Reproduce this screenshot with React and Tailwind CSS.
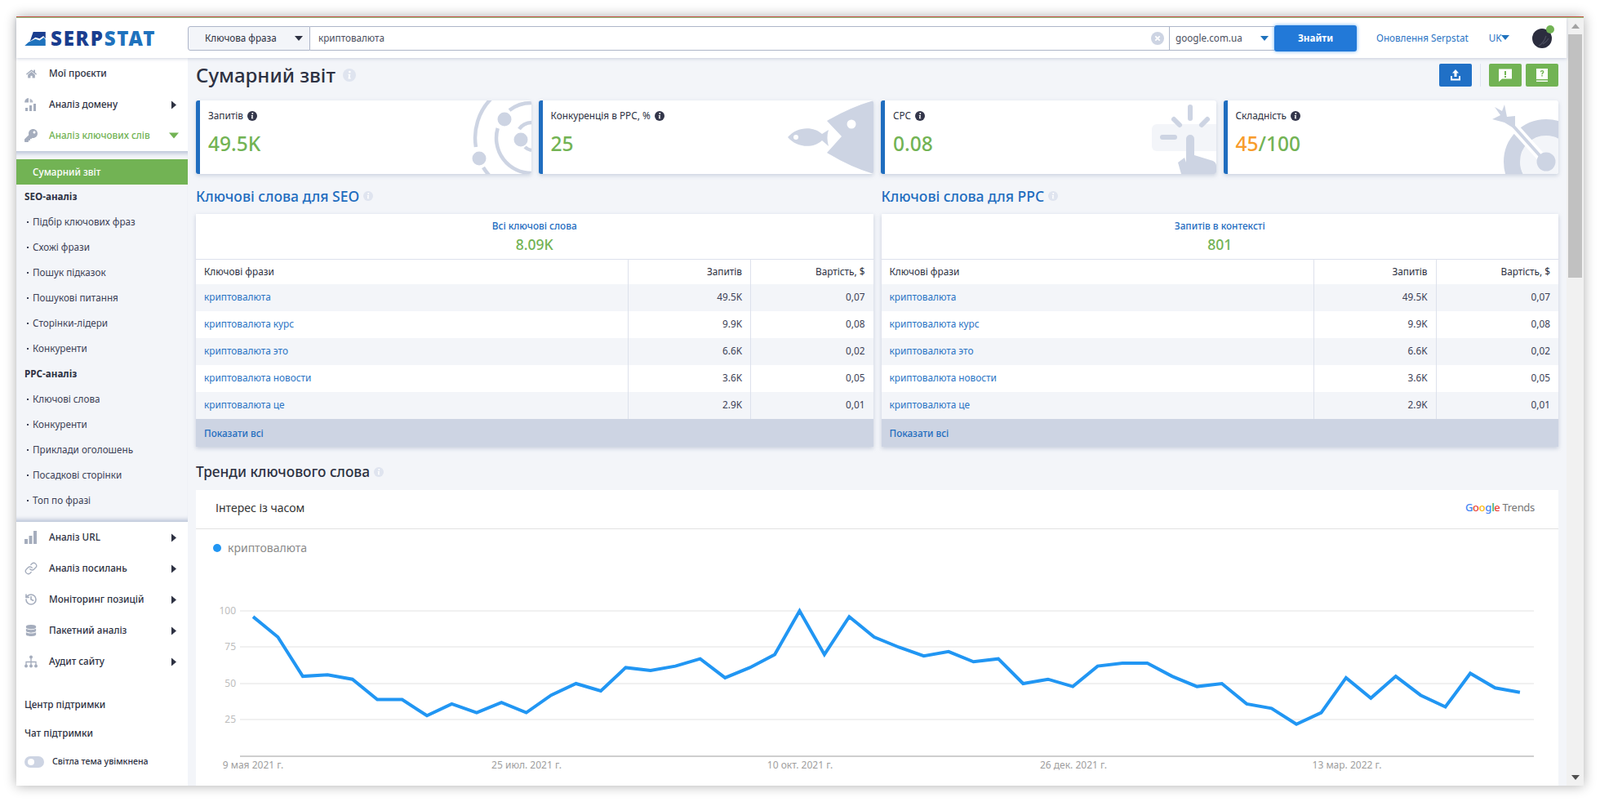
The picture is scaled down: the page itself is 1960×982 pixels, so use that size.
import React from 'react';
import { FaHome, FaKey, FaDatabase } from 'react-icons/fa';
import { History, Link } from 'lucide-react';

const seoRows = [
  ['криптовалюта', '49.5K', '0,07'],
  ['криптовалюта курс', '9.9K', '0,08'],
  ['криптовалюта это', '6.6K', '0,02'],
  ['криптовалюта новости', '3.6K', '0,05'],
  ['криптовалюта це', '2.9K', '0,01'],
];

const seoLinks = ['Підбір ключових фраз', 'Схожі фрази', 'Пошук підказок', 'Пошукові питання', 'Сторінки-лідери', 'Конкуренти'];
const ppcLinks = ['Ключові слова', 'Конкуренти', 'Приклади оголошень', 'Посадкові сторінки', 'Топ по фразі'];

const trend = [96, 82, 55, 56, 53, 39, 39, 28, 36, 30, 37, 30, 42, 50, 45, 61, 59, 62, 67, 54, 61, 70, 100, 70, 96, 82, 75, 69, 72, 65, 67, 50, 53, 48, 62, 64, 64, 55, 48, 50, 36, 33, 22, 30, 54, 40, 55, 42, 34, 57, 47, 44];

const Caret = ({ dir = 'down', className = '' }) => (
  <svg viewBox="0 0 10 10" className={className} fill="currentColor">
    {dir === 'down' && <polygon points="0,2 10,2 5,8" />}
    {dir === 'right' && <polygon points="2,0 8,5 2,10" />}
    {dir === 'up' && <polygon points="0,8 10,8 5,2" />}
  </svg>
);

const Info = ({ light, size = 12 }) => (
  <svg width={size} height={size} viewBox="0 0 12 12" className="shrink-0">
    <circle cx="6" cy="6" r="6" fill={light ? '#dfe4ef' : '#33364a'} />
    <circle cx="6.3" cy="3" r="1" fill="#fff" />
    <path d="M4.8 5h2.2l-.6 3.4h.9v.9H4.9l.5-3.4h-.6z" fill="#fff" />
  </svg>
);

const DomainIcon = () => (
  <svg width="16" height="17" viewBox="0 0 16 17" fill="#a5adbd">
    <path d="M5 0v5.500H0.200A5 5 0 0 1 5 0z" />
    <path d="M6.500 1a5 5 0 0 1 4 4.500h-4z" opacity="0.8" />
    <rect x="1" y="12" width="3" height="4" />
    <rect x="6" y="9" width="3" height="7" />
    <rect x="11" y="7" width="3" height="9" />
  </svg>
);

const BarsIcon = () => (
  <svg width="15" height="16" viewBox="0 0 15 16" fill="#a5adbd">
    <rect x="0" y="10" width="4" height="6" />
    <rect x="5.500" y="6" width="4" height="10" />
    <rect x="11" y="0" width="4" height="16" />
  </svg>
);

const TreeIcon = () => (
  <svg width="16" height="16" viewBox="0 0 16 16" fill="#a5adbd" stroke="#a5adbd">
    <circle cx="8" cy="2.500" r="2" stroke="none" />
    <path d="M8 3V13M2 13V8.500H14V13" fill="none" strokeWidth="1.300" />
    <circle cx="2" cy="13.500" r="2" stroke="none" />
    <circle cx="8" cy="13.500" r="2" stroke="none" />
    <circle cx="14" cy="13.500" r="2" stroke="none" />
  </svg>
);

const NavItem = ({ icon, label, arrow, active }) => (
  <div className="flex items-center h-[38px] pl-[10px]">
    <span className="w-[30px] flex items-center text-[#a5adbd]">{icon}</span>
    <span className={`flex-1 text-[11.700px] font-medium ${active ? 'text-[#72b354]' : 'text-[#2d3142]'}`}>{label}</span>
    {arrow && <Caret dir="right" className="w-[10px] h-[11px] mr-[12px] text-[#2d3142]" />}
    {active && <Caret className="w-[12px] h-[12px] mr-[11px] text-[#72b354]" />}
  </div>
);

const SubLink = ({ label }) => (
  <div className="flex items-center h-[31px] pl-[13px] text-[11.700px] text-[#3c4156]">
    <span className="w-[2px] h-[2px] bg-[#3c4156] mr-[5px]" />
    {label}
  </div>
);

const Sidebar = () => (
  <aside className="w-[210px] shrink-0 bg-white flex flex-col">
    <NavItem icon={<FaHome size={13} className="ml-[2px]" />} label="Мої проєкти" />
    <NavItem icon={<DomainIcon />} label="Аналіз домену" arrow />
    <NavItem icon={<FaKey size={16} />} label="Аналіз ключових слів" active />
    <div className="h-[454px] bg-[#f3f5f9] pt-[10px] shadow-[inset_0_7px_5px_-4px_#bcc5d8,inset_0_-7px_5px_-4px_#bcc5d8]">
      <div className="h-[31px] bg-[#72b354] flex items-center pl-[20px] text-[11.700px] font-medium text-white">Сумарний звіт</div>
      <div className="h-[30px] flex items-center pl-[10px] text-[11.700px] font-bold text-[#2d3142]">SEO-аналіз</div>
      {seoLinks.map((l) => <SubLink key={l} label={l} />)}
      <div className="h-[31px] flex items-center pl-[10px] text-[11.700px] font-bold text-[#2d3142]">PPC-аналіз</div>
      {ppcLinks.map((l) => <SubLink key={l} label={l} />)}
    </div>
    <NavItem icon={<BarsIcon />} label="Аналіз URL" arrow />
    <NavItem icon={<Link size={16} strokeWidth={2} />} label="Аналіз посилань" arrow />
    <NavItem icon={<History size={16} strokeWidth={2.400} />} label="Моніторинг позицій" arrow />
    <NavItem icon={<FaDatabase size={14} className="ml-[1px]" />} label="Пакетний аналіз" arrow />
    <NavItem icon={<TreeIcon />} label="Аудит сайту" arrow />
    <div className="mt-[16px] h-[35px] flex items-center pl-[10px] text-[11.700px] font-medium text-[#2d3142]">Центр підтримки</div>
    <div className="h-[35px] flex items-center pl-[10px] text-[11.700px] font-medium text-[#2d3142]">Чат підтримки</div>
    <div className="h-[35px] flex items-center pl-[10px] text-[10.600px] font-medium text-[#2d3142]">
      <span className="w-[24px] h-[14px] rounded-full bg-[#cdd4e3] flex items-center pl-[4px] mr-[10px]">
        <span className="w-[8px] h-[8px] rounded-full bg-white" />
      </span>
      Світла тема увімкнена
    </div>
  </aside>
);

const Logo = () => (
  <div className="w-[210px] shrink-0 flex items-center pl-[10px]">
    <svg width="26" height="18" viewBox="0 0 78 55">
      <path d="M32 3H78V28L70 18 56 28 40 24 20 38Z" fill="#1a3d8f" />
      <path d="M0 55 14 42 40 30 56 35 72 24 78 32V55Z" fill="#1f72bd" />
    </svg>
    <span className="ml-[6px] text-[24px] leading-none font-black tracking-[1.800px] text-[#1a3d8f]">
      SERP<span className="text-[#1f72bd]">STAT</span>
    </span>
  </div>
);

const Header = () => (
  <header className="relative z-10 flex items-center h-[49px] bg-white shadow-[0_1px_4px_rgba(130,145,175,0.4)]">
    <Logo />
    <div className="flex w-[1432px] h-[30px] text-[11.700px]">
      <div className="w-[150px] flex items-center justify-between pl-[20px] pr-[8px] bg-[#f3f5f9] border border-[#aeb6c9] rounded-l-[3px] text-[#2d3142]">
        Ключова фраза
        <Caret className="w-[10px] h-[10px] text-[#2d3142]" />
      </div>
      <div className="flex-1 flex items-center border-y border-[#aeb6c9] pl-[10px] pr-[6px]">
        <input readOnly value="криптовалюта" className="flex-1 outline-none text-[#4b4f60]" />
        <svg width="16" height="16" viewBox="0 0 16 16">
          <circle cx="8" cy="8" r="8" fill="#cdd4e3" />
          <path d="M5.300 5.300l5.400 5.400M10.700 5.300l-5.400 5.400" stroke="#fff" strokeWidth="1.800" />
        </svg>
      </div>
      <div className="w-[129px] flex items-center justify-between pl-[7px] pr-[7px] border border-r-0 border-[#aeb6c9] text-[#4b4f60]">
        google.com.ua
        <Caret className="w-[10px] h-[10px] text-[#1f72bd]" />
      </div>
      <button className="w-[101px] -my-[1px] bg-[#2279d8] rounded-[3px] text-white font-bold shadow-[0_0_4px_rgba(60,150,240,0.8)]">Знайти</button>
    </div>
    <span className="ml-[24px] text-[11.700px] text-[#2b74c4]">Оновлення Serpstat</span>
    <span className="ml-[25px] flex items-center text-[11.700px] text-[#2b74c4]">
      UK
      <Caret className="w-[10px] h-[10px] text-[#1f72bd]" />
    </span>
    <div className="relative ml-[28px] w-[24px] h-[24px] rounded-full bg-[#2b2d3e]">
      <svg viewBox="0 0 24 24" className="w-[24px] h-[24px]" fill="none" stroke="#4a4d5e" strokeWidth="1.200">
        <path d="M8 21Q14 18 17 9" />
        <path d="M13 19Q18 16 20 12" />
      </svg>
      <span className="absolute -top-[4px] -right-[3px] w-[10px] h-[10px] rounded-full bg-[#72b354]" />
    </div>
  </header>
);

const Orbits = () => (
  <svg viewBox="0 0 110 90" className="absolute right-0 top-0 w-[110px] h-[90px]" fill="none" stroke="#cdd4e3" strokeWidth="4.500">
    <path d="M60.400 -2A69 69 0 0 0 41.900 57" />
    <path d="M51 82A69 69 0 0 0 62.400 96" />
    <path d="M68.700 34A43 43 0 0 0 110 89" />
    <path d="M110 3A43 43 0 0 0 83 12" />
    <path d="M110 27A19 19 0 0 0 95 35" />
    <path d="M102 57Q105 60 110 61" />
    <circle cx="46" cy="71" r="8.500" fill="#cdd4e3" stroke="none" />
    <circle cx="77" cy="23" r="8.500" fill="#cdd4e3" stroke="none" />
    <circle cx="97" cy="48" r="8.500" fill="#cdd4e3" stroke="none" />
  </svg>
);

const Fish = () => (
  <svg viewBox="0 0 110 90" className="absolute right-0 top-0 w-[110px] h-[90px]">
    <path d="M110 0Q80 9 53 25L71 44 53 64Q80 81 110 90Z" fill="#cdd4e3" />
    <circle cx="83" cy="29" r="5.500" fill="#fff" />
    <path d="M5 45C15 33 35 30 47 41L55 36Q52 45 55 56L47 49C35 60 15 57 5 45Z" fill="#cdd4e3" />
    <circle cx="15" cy="45" r="3" fill="#fff" />
  </svg>
);

const Hand = () => (
  <svg viewBox="0 0 110 90" className="absolute right-0 top-0 w-[110px] h-[90px]">
    <path d="M37 29H110V62H37A6 6 0 0 1 31 56V35A6 6 0 0 1 37 29Z" fill="#f3f5f9" />
    <g stroke="#cdd4e3" strokeWidth="6" strokeLinecap="round">
      <path d="M78 8V22" />
      <path d="M58 23L65 30" />
      <path d="M99 23L92 30" />
      <path d="M44 45H59" />
    </g>
    <path d="M73 47a5 5 0 0 1 10 0V67L106 74Q110 76 110 80V90H67L63 76 71 70 73 76Z" fill="#cdd4e3" />
  </svg>
);

const Target = () => (
  <svg viewBox="0 0 110 90" className="absolute right-0 top-0 w-[110px] h-[90px]" fill="none">
    <circle cx="95" cy="75" r="32" fill="#f3f5f9" />
    <circle cx="95" cy="75" r="42" stroke="#cdd4e3" strokeWidth="20" />
    <path d="M94 75L48 24" stroke="#fff" strokeWidth="11" />
    <path d="M94 75L50 26" stroke="#cdd4e3" strokeWidth="4" />
    <path d="M32 8L41 13 44 5 47 20 57 19 57 35 44 27 29 23 39 18Z" fill="#cdd4e3" />
    <circle cx="95" cy="75" r="11.500" fill="#cdd4e3" />
  </svg>
);

const StatCard = ({ label, art, children }) => (
  <div className="relative h-[90px] bg-white rounded-[3px] border-l-[5px] border-[#1f6dbf] overflow-hidden pl-[10px] shadow-[0_2px_5px_rgba(130,145,175,0.35)]">
    <div className="flex items-center gap-[5px] mt-[11px] h-[16px] text-[11.800px] text-[#2d3142]">
      {label}
      <Info />
    </div>
    <div className="mt-[11px] text-[24.500px] leading-[30px] font-medium text-[#72b354]">{children}</div>
    {art}
  </div>
);

const KeywordsTable = ({ title, subtitle, total }) => (
  <div>
    <div className="flex items-center gap-[5px] h-[26px] mb-[9px] text-[17.500px] font-medium text-[#1f6dbf]">
      {title}
      <Info light />
    </div>
    <div className="bg-white shadow-[0_2px_5px_rgba(130,145,175,0.4)]">
      <div className="h-[56px] border-b border-[#dde1ec] flex flex-col items-center pt-[5px]">
        <div className="h-[18px] leading-[18px] text-[11.800px] font-medium text-[#1f6dbf]">{subtitle}</div>
        <div className="mt-[1px] h-[26px] leading-[26px] text-[17.500px] font-medium text-[#72b354]">{total}</div>
      </div>
      <table className="w-full table-fixed text-[11.800px]">
        <thead>
          <tr className="h-[30px] text-[#2d3142]">
            <th className="font-normal text-left pl-[10px] border-r border-[#dde1ec]">Ключові фрази</th>
            <th className="w-[150px] font-normal text-right pr-[10px] border-r border-[#dde1ec]">Запитів</th>
            <th className="w-[150px] font-normal text-right pr-[10px]">Вартість, $</th>
          </tr>
        </thead>
        <tbody>
          {seoRows.map((r, i) => (
            <tr key={r[0]} className={`h-[33px] ${i % 2 === 0 ? 'bg-[#f3f5f9]' : 'bg-white'}`}>
              <td className="pl-[10px] pb-[1px] text-[#2b74c4] border-r border-[#dde1ec]">{r[0]}</td>
              <td className="text-right pr-[10px] pb-[1px] text-[#3c4156] border-r border-[#dde1ec]">{r[1]}</td>
              <td className="text-right pr-[10px] pb-[1px] text-[#3c4156]">{r[2]}</td>
            </tr>
          ))}
        </tbody>
      </table>
      <div className="h-[34px] bg-[#cdd4e3] flex items-center pl-[10px] pt-[2px] text-[11.700px] font-medium text-[#1f6dbf]">Показати всі</div>
    </div>
  </div>
);

const Chart = () => {
  const xAt = (i) => 70 + i * 30.43;
  const yAt = (v) => 48 + (100 - v) * 1.78;
  const points = trend.map((v, i) => `${xAt(i).toFixed(1)},${yAt(v).toFixed(1)}`).join(' ');
  const ticks = [[100, 48], [75, 92], [50, 137], [25, 181]];
  const dates = [[70, '9 мая 2021 г.'], [405, '25 июл. 2021 г.'], [740, '10 окт. 2021 г.'], [1075, '26 дек. 2021 г.'], [1410, '13 мар. 2022 г.']];
  return (
    <svg width="1669" height="262" className="block font-['Roboto',sans-serif]">
      {ticks.map(([label, y]) => (
        <g key={label}>
          <line x1="54" x2="1639" y1={y} y2={y} stroke="#e2e2e2" />
          <text x="49" y={y + 4} textAnchor="end" fontSize="12" fill="#bdbdbd">{label}</text>
        </g>
      ))}
      <line x1="54" x2="1639" y1="226" y2="226" stroke="#9e9e9e" />
      {dates.map(([x, label]) => (
        <text key={label} x={x} y="241" textAnchor="middle" fontSize="12" fill="#9e9e9e">{label}</text>
      ))}
      <polyline points={points} fill="none" stroke="#2196f3" strokeWidth="4" strokeLinejoin="miter" />
    </svg>
  );
};

const TrendsCard = () => (
  <div className="bg-white h-[362px] overflow-hidden">
    <div className="h-[48px] border-b border-[#e2e2e2] flex items-center justify-between pl-[24px] pr-[29px] pb-[4px]">
      <span className="text-[14px] text-[#333]">Інтерес із часом</span>
      <span className="text-[13px] font-medium tracking-[-0.300px]">
        <span className="text-[#4285f4]">G</span>
        <span className="text-[#ea4335]">o</span>
        <span className="text-[#fbbc05]">o</span>
        <span className="text-[#4285f4]">g</span>
        <span className="text-[#34a853]">l</span>
        <span className="text-[#ea4335]">e</span>
        <span className="ml-[3px] font-normal text-[#757575]">Trends</span>
      </span>
    </div>
    <div className="h-[52px] flex items-start pt-[15px] pl-[21px] text-[14px] leading-[16px] text-[#8a8a8a]">
      <span className="w-[10px] h-[10px] mt-[3px] rounded-full bg-[#2196f3] mr-[8px]" />
      криптовалюта
    </div>
    <Chart />
  </div>
);

const ActionButton = ({ color, children }) => (
  <button className={`w-[40px] h-[28px] rounded-[2px] flex items-center justify-center ${color}`}>{children}</button>
);

const Main = () => (
  <main className="flex-1 min-w-0 bg-[#f3f5f9] px-[10px] overflow-hidden">
    <div className="flex items-center h-[28px] mt-[7px] mb-[17px]">
      <h1 className="text-[24px] font-medium text-[#2d3142] mr-[9px]">Сумарний звіт</h1>
      <Info light size={16} />
      <div className="ml-auto flex items-center">
        <ActionButton color="bg-[#2070c6]">
          <svg width="16" height="16" viewBox="0 0 16 16" fill="#fff">
            <path d="M8 1l4 4.500H9.500V10h-3V5.500H4z" />
            <path d="M2 9h2v3.500h8V9h2v5.500H2z" />
          </svg>
        </ActionButton>
        <span className="w-[1px] h-[28px] bg-[#dfe4ef] mx-[10px]" />
        <ActionButton color="bg-[#72b354] mr-[5px]">
          <svg width="18" height="18" viewBox="0 0 18 18" fill="#fff">
            <path d="M1 1.500h16v12H5L1 17z" />
            <rect x="8" y="4" width="2" height="5" fill="#72b354" />
            <rect x="8" y="10" width="2" height="2" fill="#72b354" />
          </svg>
        </ActionButton>
        <ActionButton color="bg-[#72b354]">
          <svg width="16" height="18" viewBox="0 0 16 18" fill="#fff">
            <path d="M1 1h14v13H1z" />
            <path d="M1 15.500h14V17H1z" />
            <path d="M5.800 5.200C5.800 3.800 6.800 3 8.100 3s2.300.8 2.300 2c0 1.900-1.700 1.700-1.700 3.300H7.300C7.300 6 8.900 6 8.900 5c0-.5-.3-.8-.8-.8s-.9.400-.9 1zM7.300 9h1.400v1.500H7.300z" fill="#72b354" />
          </svg>
        </ActionButton>
      </div>
    </div>
    <div className="grid grid-cols-4 gap-[9px] mb-[14px]">
      <StatCard label="Запитів" art={<Orbits />}>49.5K</StatCard>
      <StatCard label="Конкуренція в PPC, %" art={<Fish />}>25</StatCard>
      <StatCard label="CPC" art={<Hand />}>0.08</StatCard>
      <StatCard label="Складність" art={<Target />}>
        <span className="text-[#f89c2b]">45</span>/100
      </StatCard>
    </div>
    <div className="grid grid-cols-2 gap-[10px]">
      <KeywordsTable title="Ключові слова для SEO" subtitle="Всі ключові слова" total="8.09K" />
      <KeywordsTable title="Ключові слова для PPC" subtitle="Запитів в контексті" total="801" />
    </div>
    <div className="flex items-center gap-[5px] h-[26px] mt-[18px] mb-[9px] text-[17.300px] font-medium text-[#2d3142]">
      Тренди ключового слова
      <Info light />
    </div>
    <TrendsCard />
  </main>
);

const Scrollbar = () => (
  <div className="w-[21px] shrink-0 bg-[#f1f1f1] flex flex-col items-center">
    <Caret dir="up" className="w-[10px] h-[20px] text-[#a3a3a3]" />
    <div className="w-[17px] h-[298px] bg-[#c1c1c1]" />
    <Caret className="w-[10px] h-[10px] mt-auto mb-[5px] text-[#505050]" />
  </div>
);

export default function App() {
  return (
    <div className="w-[1960px] h-[982px] bg-white overflow-hidden pl-[20px] pt-[20px] font-['Roboto',sans-serif]">
      <div className="w-[1920px] h-[942px] flex flex-col bg-white shadow-[0_0_14px_rgba(0,0,0,0.32)]">
        <div className="h-[1px] bg-[#c9584a]" />
        <div className="h-[1px] bg-[#8fbf78]" />
        <div className="flex flex-1 min-h-0">
          <div className="flex-1 min-w-0 flex flex-col">
            <Header />
            <div className="flex flex-1 min-h-0">
              <Sidebar />
              <Main />
            </div>
          </div>
          <Scrollbar />
        </div>
      </div>
    </div>
  );
}
